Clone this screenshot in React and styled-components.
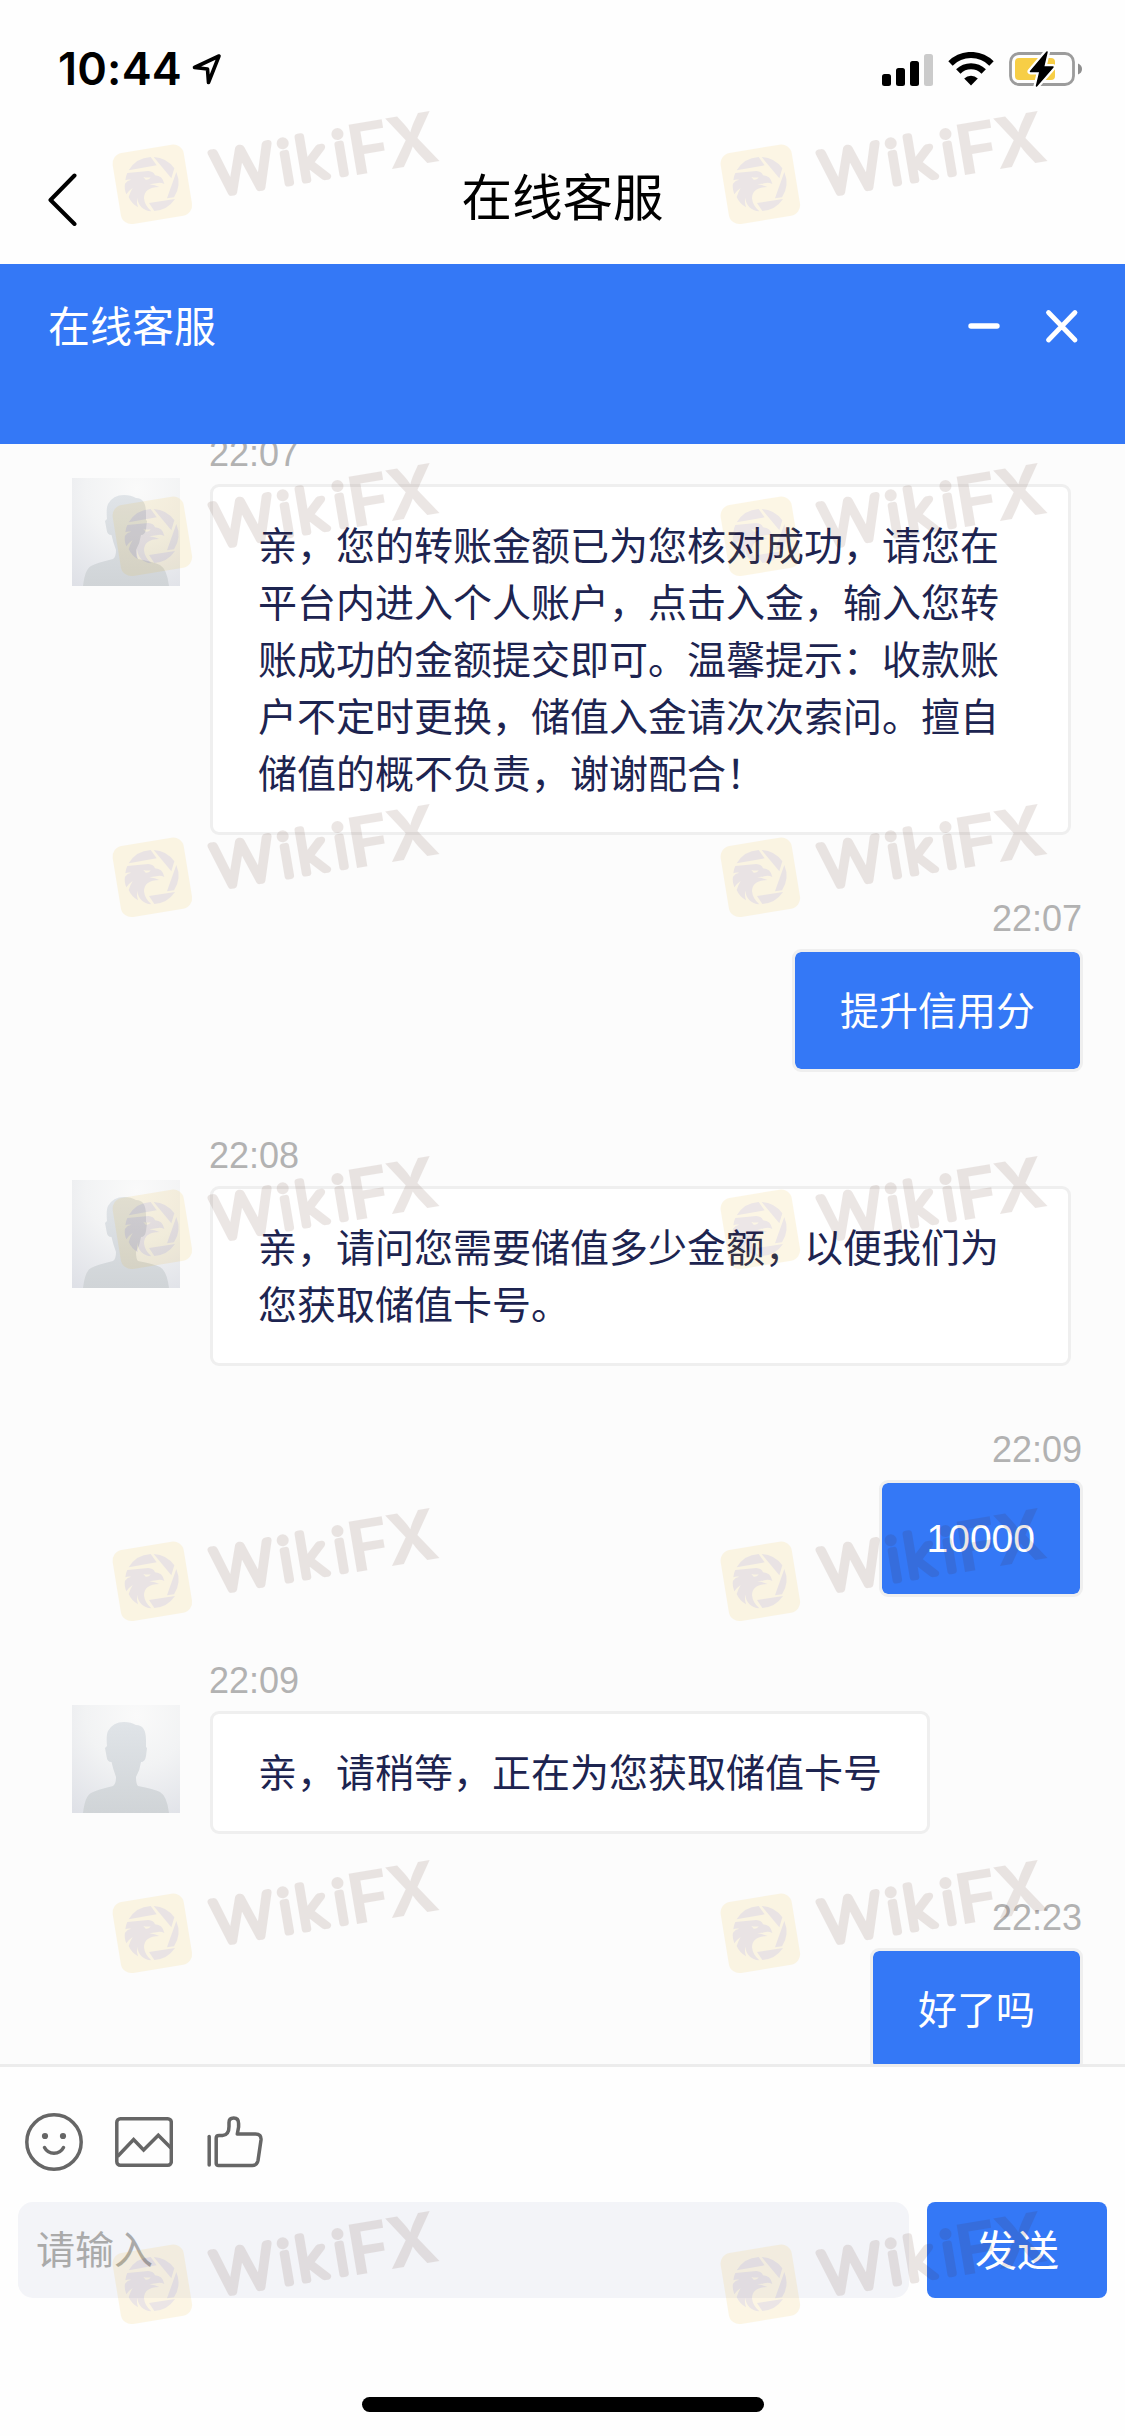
import { useState } from 'react';
import styled, { createGlobalStyle } from 'styled-components';

const BLUE = '#3478f6';
const SANS = '"Liberation Sans", "Noto Sans CJK SC", sans-serif';

const GlobalStyle = createGlobalStyle`
    * {
        box-sizing:border-box;
    }

    body {
        margin:0;
        background-color:white;
        font-family:${SANS};
    }
`;

const Screen = styled.div`
    position:relative;
    width:1125px;
    height:2436px;
    display:flex;
    flex-direction:column;
    overflow:hidden;
    background-color:#fefefe;
`;

const StatusBar = styled.div`
    height:132px;
    padding:50px 43px 0 58px;
    display:flex;
    justify-content:space-between;
    align-items:flex-start;
`;

const StatusLeft = styled.div`
    display:flex;
    align-items:center;
    gap:11px;
    height:38px;
`;

const StatusRight = styled.div`
    display:flex;
    align-items:center;
    gap:15px;
    height:38px;
`;

const Clock = styled.span`
    font-family:Inter, sans-serif;
    font-size:45px;
    font-weight:600;
    line-height:38px;
    width:123px;
    white-space:nowrap;
    letter-spacing:0.2px;
`;

const NavBar = styled.div`
    height:132px;
    padding:1px 46px 0;
    display:grid;
    grid-template-columns:100px 1fr 100px;
    align-items:center;
`;

const NavTitle = styled.h1`
    margin:0;
    font-size:50.5px;
    font-weight:400;
    line-height:60px;
    text-align:center;
    color:black;
`;

const ChatHeader = styled.div`
    height:180px;
    padding:33px 44px 0 48px;
    display:flex;
    justify-content:space-between;
    align-items:flex-start;
    background-color:${BLUE};
`;

const ChatTitle = styled.h2`
    margin:0;
    font-size:42px;
    font-weight:400;
    line-height:62px;
    color:white;
`;

const ChatActions = styled.div`
    display:flex;
    align-items:center;
    gap:40px;
    height:60px;
    padding-bottom:2px;
`;

const MessageList = styled.div`
    height:1620px;
    overflow:hidden;
    background-color:#fcfcfc;
    padding:0 42px 0 72px;
`;

const MessageStack = styled.div`
    display:flex;
    flex-direction:column;
    gap:63px;
    margin-top:-11px;
`;

const MessageItem = styled.div`
    display:flex;
    flex-direction:column;
    align-items:${props => props.$mine ? 'flex-end' : 'flex-start'};
    gap:9px;
`;

const MessageTime = styled.span`
    height:42px;
    line-height:42px;
    font-size:36px;
    color:#b2b2b2;
    margin-left:${props => props.$mine ? '0' : '137px'};
    margin-right:${props => props.$mine ? '1px' : '0'};
`;

const MessageRow = styled.div`
    display:flex;
    align-items:flex-start;
    gap:30px;
`;

const Bubble = styled.div`
    max-width:861px;
    padding:${props => props.$latin ? '30px 45px' : '31px 45px 29px'};
    border:3px solid #efefef;
    border-radius:9px;
    font-size:39px;
    line-height:${props => props.$latin ? '51px' : '57px'};
    background-color:${props => props.$mine ? BLUE : 'white'};
    background-clip:padding-box;
    color:${props => props.$mine ? 'white' : '#1d2450'};
`;

const AvatarImage = styled.svg`
    display:block;
    width:108px;
    height:108px;
    margin-top:-6px;
`;

const Footer = styled.div`
    flex:1;
    display:flex;
    flex-direction:column;
    border-top:3px solid #ececec;
    padding:46px 18px 24px;
`;

const Tools = styled.div`
    display:flex;
    gap:32px;
    padding-left:7px;
    margin-bottom:31px;

    svg {
        fill:none;
        stroke:#666;
        stroke-width:3.5;
        stroke-linejoin:round;
    }
`;

const InputRow = styled.div`
    display:flex;
    gap:18px;
`;

const MessageInput = styled.input`
    flex:1;
    height:96px;
    padding:2px 18px 0;
    border:none;
    border-radius:15px;
    outline:none;
    font-family:${SANS};
    font-size:39px;
    background-color:#f3f4f8;

    &::placeholder {
        color:#aaa;
    }
`;

const SendButton = styled.button`
    width:180px;
    height:96px;
    padding:0 0 5px;
    border:none;
    border-radius:8px;
    font-family:${SANS};
    font-size:42px;
    color:white;
    background-color:${BLUE};
`;

const HomeIndicator = styled.div`
    width:402px;
    height:15px;
    margin:auto auto 0;
    border-radius:8px;
    background-color:black;
`;

const MarkLayer = styled.div`
    position:absolute;
    inset:0;
    pointer-events:none;
`;

const Mark = styled.svg`
    position:absolute;
    left:${props => props.$x}px;
    top:${props => props.$y}px;
    width:350px;
    height:140px;
    opacity:.103;
    overflow:visible;
`;

const MESSAGES = [
    { id: 1, time: '22:07', text: '亲，您的转账金额已为您核对成功，请您在平台内进入个人账户，点击入金，输入您转账成功的金额提交即可。温馨提示：收款账户不定时更换，储值入金请次次索问。擅自储值的概不负责，谢谢配合！' },
    { id: 2, time: '22:07', text: '提升信用分', mine: true },
    { id: 3, time: '22:08', text: '亲，请问您需要储值多少金额，以便我们为您获取储值卡号。' },
    { id: 4, time: '22:09', text: '10000', mine: true, latin: true },
    { id: 5, time: '22:09', text: '亲，请稍等，正在为您获取储值卡号' },
    { id: 6, time: '22:23', text: '好了吗', mine: true },
];

const MARK_COLUMNS = [100, 708];
const MARK_ROWS = [103, 455, 796, 1148, 1500, 1852, 2203];

const LocationIcon = () => (
    <svg width="30" height="32" viewBox="0 0 30 32" fill="none" stroke="black" strokeWidth="3.6" strokeLinejoin="round">
        <path d="M27 3 2.5 14.5 15.5 16 16.5 29.5Z" />
    </svg>
);

const SignalIcon = () => (
    <svg width="51" height="33" viewBox="0 0 51 33">
        <rect x="0" y="21" width="9" height="12" rx="2.5" />
        <rect x="14" y="15" width="9" height="18" rx="2.5" />
        <rect x="28" y="8" width="9" height="25" rx="2.5" />
        <rect x="42" y="1" width="9" height="32" rx="2.5" fill="#cbcbcb" />
    </svg>
);

const WifiIcon = () => (
    <svg width="46" height="34" viewBox="0 0 46 34" fill="none" stroke="black" strokeWidth="6.2">
        <path d="M2.5 11.5A29 29 0 0 1 43.5 11.5" />
        <path d="M10.3 19.5A18 18 0 0 1 35.7 19.5" />
        <path d="M23 33.5 16.2 26.6A9.6 9.6 0 0 1 29.8 26.6Z" fill="black" stroke="none" />
    </svg>
);

const BatteryIcon = () => (
    <svg width="73" height="38" viewBox="0 0 73 38">
        <rect x="1.5" y="3.5" width="63" height="31" rx="8.5" fill="none" stroke="#9c9c9c" strokeWidth="2.8" />
        <path d="M69 13.5Q73 15 73 19Q73 23 69 24.5Z" fill="#8f8f8f" />
        <rect x="6" y="8" width="40" height="22" rx="4" fill="#f7ce46" />
        <path d="M38 2 21.5 21.5H31L27.5 36 44 17H34.5Z" fill="black" stroke="white" strokeWidth="6" strokeLinejoin="round" paintOrder="stroke" />
        <path d="M38 2 21.5 21.5H31L27.5 36 44 17H34.5Z" stroke="black" strokeWidth="1.5" strokeLinejoin="round" />
    </svg>
);

const BackIcon = () => (
    <svg width="34" height="54" viewBox="0 0 34 54" fill="none" stroke="black" strokeWidth="4" strokeLinecap="round" strokeLinejoin="round">
        <path d="M28.5 3.5 4.500 28 28.500 52" />
    </svg>
);

const MinimizeIcon = () => (
    <svg width="38" height="38" viewBox="0 0 38 38" stroke="white" strokeWidth="5.4" strokeLinecap="round">
        <path d="M6 19H32" />
    </svg>
);

const CloseIcon = () => (
    <svg width="38" height="38" viewBox="0 0 38 38" stroke="white" strokeWidth="4.8" strokeLinecap="round">
        <path d="M5.5 5.5 32 33M32 5.5 5.5 33" />
    </svg>
);

const SmileIcon = () => (
    <svg width="58" height="58" viewBox="0 0 58 58">
        <circle cx="29" cy="29" r="27.2" />
        <circle cx="20" cy="23" r="3.1" fill="#666" stroke="none" />
        <circle cx="38" cy="23" r="3.1" fill="#666" stroke="none" />
        <path d="M19.5 34.5Q22.5 40.2 29 40.2Q35.5 40.2 38.5 34.5" strokeLinecap="round" />
    </svg>
);

const PictureIcon = () => (
    <svg width="58" height="58" viewBox="0 0 58 58">
        <rect x="1.8" y="5.8" width="54.5" height="46.5" rx="3.5" />
        <path d="M2.5 43.5 18.6 26.5 28.6 37 43.3 22.2 56 35" strokeLinejoin="miter" />
    </svg>
);

const LikeIcon = () => (
    <svg width="58" height="58" viewBox="0 0 58 58">
        <path d="M4.2 23.5V52" strokeLinecap="round" />
        <path d="M14 22.5H17.5Q24 22 24 13.5V9.5Q24 5 28.7 5Q33.6 5 33.6 10.5V14L32.3 21H50.5Q56.5 21 56 27L53 47.5Q52 52.5 47.5 52.5H13.5Q11.2 52.5 11.2 50.5V25Q11.2 22.5 14 22.5Z" />
    </svg>
);

const Avatar = () => (
    <AvatarImage viewBox="0 0 108 108">
        <defs>
            <radialGradient id="avatarBack" cx="0.6" cy="0.1" r="1.05">
                <stop offset="0" stopColor="#fafafa" />
                <stop offset="0.45" stopColor="#f2f3f4" />
                <stop offset="1" stopColor="#dfe1e7" />
            </radialGradient>
            <linearGradient id="avatarBody" x1="0" y1="0" x2="0" y2="1">
                <stop offset="0" stopColor="#e0e4e8" />
                <stop offset="1" stopColor="#d0d4d7" />
            </linearGradient>
        </defs>
        <rect width="108" height="108" fill="url(#avatarBack)" />
        <path d="M11 108Q13 91 19 88Q24 85 41 81Q44 79 44 72Q41 64 39.5 57Q35 57 34.5 51L33 43L35 41Q34 30 36 26Q41 17 52 17Q59 17 64 20Q74 20 74 35V42L75 43L74 51Q73 57 69 57Q68 65 64 72Q64 79 66 81Q82 84 88 87Q95 91 97 108Z" fill="url(#avatarBody)" />
    </AvatarImage>
);

const BrandMark = ({ x, y }) => (
    <Mark $x={x} $y={y} viewBox="0 0 1050 420">
        <rect x="49" y="136" width="216" height="216" rx="32" fill="rgb(236,177,12)" transform="rotate(-9.3 157 244)" />
        <g fill="#4b1620">
            <path d="M86 202A82 82 0 0 1 152 162L170 187Z" />
            <path d="M161 162A82 82 0 0 1 223 196L214 226Z" />
            <path d="M229 207A82 82 0 0 1 222 283L201 286Z" />
            <path d="M147 300 225 288A82 82 0 0 1 163 324Z" />
            <path d="M82 210 145 204Q161 205 165 217Q188 218 193 243Q181 237 169 241L148 244Q165 246 178 252Q132 253 132 286Q134 308 154 325Q116 321 112 284Q109 298 114 313Q94 301 86 282Q90 268 98 255Q86 263 79 274Q72 256 75 242Q82 232 94 230Q83 228 76 232Q77 220 82 210Z" />
        </g>
        <path d="M130 222Q140 225 152 223Q148 232 137 230Z" fill="rgb(236,177,12)" />
        <g transform="rotate(-9.5)" fill="rgb(71,22,3)">
            <text x="299 501 554 667" y="330" fontFamily="Lato, sans-serif" fontSize="180" fontWeight="300" stroke="rgb(71,22,3)" strokeWidth="20" strokeLinejoin="round">Wiki</text>
            <text x="711 826" y="340" fontFamily="Inter, sans-serif" fontSize="210" fontWeight="700">FX</text>
        </g>
    </Mark>
);

const Message = ({ message }) => (
    <MessageItem $mine={message.mine}>
        <MessageTime $mine={message.mine}>{message.time}</MessageTime>
        <MessageRow>
            {!message.mine && <Avatar />}
            <Bubble $mine={message.mine} $latin={message.latin}>{message.text}</Bubble>
        </MessageRow>
    </MessageItem>
);

const App = () => {

    const [texto, setTexto] = useState('');

    return (
        <>
            <GlobalStyle />
            <Screen>
                <StatusBar>
                    <StatusLeft>
                        <Clock>10:44</Clock>
                        <LocationIcon />
                    </StatusLeft>
                    <StatusRight>
                        <SignalIcon />
                        <WifiIcon />
                        <BatteryIcon />
                    </StatusRight>
                </StatusBar>
                <NavBar>
                    <BackIcon />
                    <NavTitle>在线客服</NavTitle>
                </NavBar>
                <ChatHeader>
                    <ChatTitle>在线客服</ChatTitle>
                    <ChatActions>
                        <MinimizeIcon />
                        <CloseIcon />
                    </ChatActions>
                </ChatHeader>
                <MessageList>
                    <MessageStack>
                        {MESSAGES.map(message => <Message key={message.id} message={message} />)}
                    </MessageStack>
                </MessageList>
                <Footer>
                    <Tools>
                        <SmileIcon />
                        <PictureIcon />
                        <LikeIcon />
                    </Tools>
                    <InputRow>
                        <MessageInput value={texto} placeholder="请输入" onChange={evt => setTexto(evt.target.value)} />
                        <SendButton>发送</SendButton>
                    </InputRow>
                    <HomeIndicator />
                </Footer>
                <MarkLayer>
                    {MARK_ROWS.map(y => MARK_COLUMNS.map(x => <BrandMark key={`${x}-${y}`} x={x} y={y} />))}
                </MarkLayer>
            </Screen>
        </>
    )

}

export default App;
